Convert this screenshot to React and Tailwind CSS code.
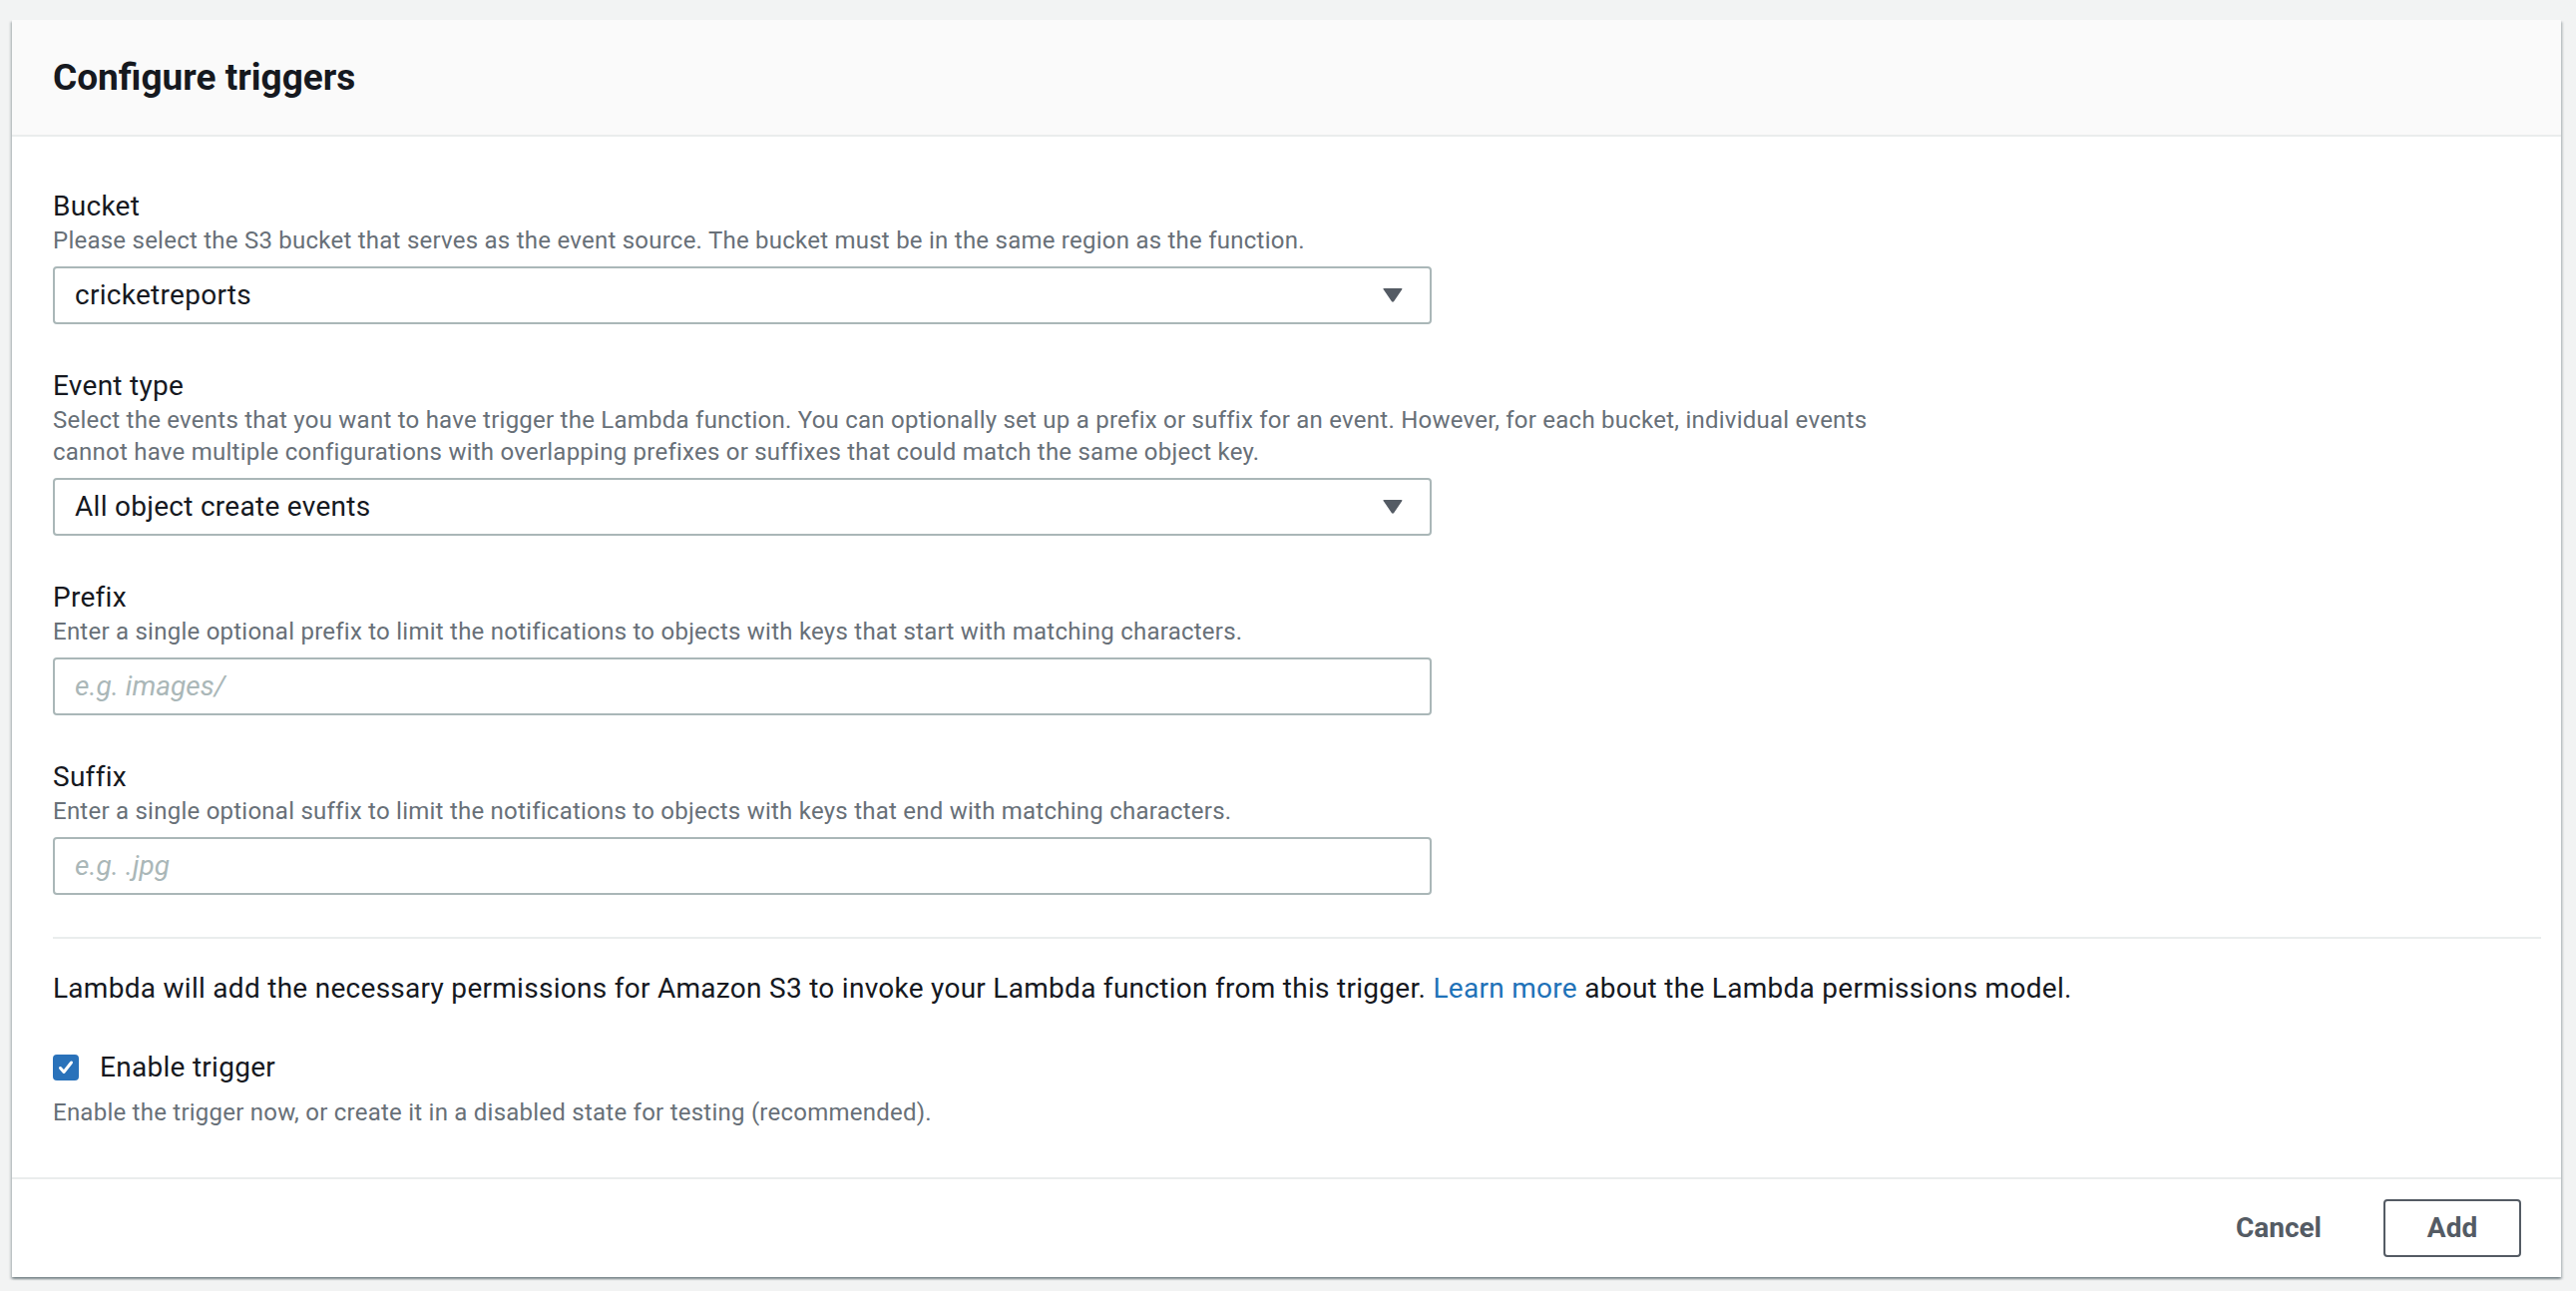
import React from 'react'

const font = { fontFamily: 'Roboto, "Liberation Sans", sans-serif' }

function Caret() {
  return (
    <svg className="w-[22px] h-[14px]" viewBox="0 0 22 14" fill="#545b64">
      <path d="M1 1.5Q1 0 2.5 0h17Q21 0 20.2 1.3L12.2 13q-1.2 1.6-2.4 0L1.8 1.3Q1 0.5 1 1.5z" />
    </svg>
  )
}

function Field({ label, children, description, first }) {
  return (
    <div className={first ? '' : 'mt-[44px]'}>
      <div className="text-[28px] leading-[36px] text-[#16191f] tracking-[0.01em]">{label}</div>
      <div className="text-[24px] leading-[32px] text-[#687078] tracking-[0.01em]">{description}</div>
      <div className="mt-[10px]">{children}</div>
    </div>
  )
}

function SelectBox({ value }) {
  return (
    <div className="w-[1382px] h-[58px] border-2 border-[#aab7b8] rounded-[4px] bg-white flex items-center justify-between pl-[20px] pr-[26px]">
      <span className="text-[28px] text-[#16191f] tracking-[0.01em]">{value}</span>
      <Caret />
    </div>
  )
}

function TextBox({ placeholder }) {
  return (
    <div className="w-[1382px] h-[58px] border-2 border-[#aab7b8] rounded-[4px] bg-white flex items-center pl-[20px]">
      <span className="text-[28px] italic text-[#aab7b8]">{placeholder}</span>
    </div>
  )
}

export default function App() {
  return (
    <div className="min-h-screen bg-[#f2f3f3] pt-[20px] pl-[12px] pr-[15px] pb-[14px]" style={font}>
      <div className="bg-white shadow-[0_2px_2px_0_rgba(0,28,36,0.3),2px_2px_2px_0_rgba(0,28,36,0.15),-2px_2px_2px_0_rgba(0,28,36,0.15)]">
        {/* Header */}
        <div className="h-[117px] bg-[#fafafa] border-b-2 border-[#eaeded] flex items-center px-[41px]">
          <h2 className="text-[37px] font-bold text-[#16191f]">Configure triggers</h2>
        </div>

        {/* Body */}
        <div className="pt-[52px] pl-[41px] pr-[20px]">
          <Field
            first
            label="Bucket"
            description="Please select the S3 bucket that serves as the event source. The bucket must be in the same region as the function."
          >
            <SelectBox value="cricketreports" />
          </Field>
          <Field
            label="Event type"
            description={<>Select the events that you want to have trigger the Lambda function. You can optionally set up a prefix or suffix for an event. However, for each bucket, individual events<br />cannot have multiple configurations with overlapping prefixes or suffixes that could match the same object key.</>}
          >
            <SelectBox value="All object create events" />
          </Field>
          <Field
            label="Prefix"
            description="Enter a single optional prefix to limit the notifications to objects with keys that start with matching characters."
          >
            <TextBox placeholder="e.g. images/" />
          </Field>
          <Field
            label="Suffix"
            description="Enter a single optional suffix to limit the notifications to objects with keys that end with matching characters."
          >
            <TextBox placeholder="e.g. .jpg" />
          </Field>

          <div className="mt-[42px] border-t-2 border-[#eaeded]" />

          <p className="mt-[32px] text-[28px] leading-[36px] text-[#16191f] tracking-[0.01em]">
            Lambda will add the necessary permissions for Amazon S3 to invoke your Lambda function from this trigger.{' '}
            <span className="text-[#1f72b8]">Learn more</span> about the Lambda permissions model.
          </p>

          <div className="mt-[43px] flex items-center gap-[21px]">
            <span className="w-[26px] h-[26px] rounded-[4px] bg-[#2a72ba] flex items-center justify-center">
              <svg className="w-[18px] h-[18px]" viewBox="0 0 18 18" fill="none" stroke="white" strokeWidth="3" strokeLinecap="round" strokeLinejoin="round">
                <path d="M3.5 9.5l3.5 4 7.5-9.5" />
              </svg>
            </span>
            <span className="text-[28px] leading-[36px] text-[#16191f] tracking-[0.01em]">Enable trigger</span>
          </div>
          <div className="mt-[11px] text-[24px] leading-[32px] text-[#687078] tracking-[0.01em]">
            Enable the trigger now, or create it in a disabled state for testing (recommended).
          </div>
        </div>

        {/* Footer */}
        <div className="mt-[49px] border-t-2 border-[#eaeded] h-[100px] flex items-center justify-end pr-[40px]">
          <button className="px-[30px] h-[58px] text-[28px] font-bold text-[#545b64]">Cancel</button>
          <button className="ml-[32px] w-[138px] h-[58px] border-2 border-[#545b64] rounded-[4px] text-[28px] font-bold text-[#545b64]">Add</button>
        </div>
      </div>
    </div>
  )
}
